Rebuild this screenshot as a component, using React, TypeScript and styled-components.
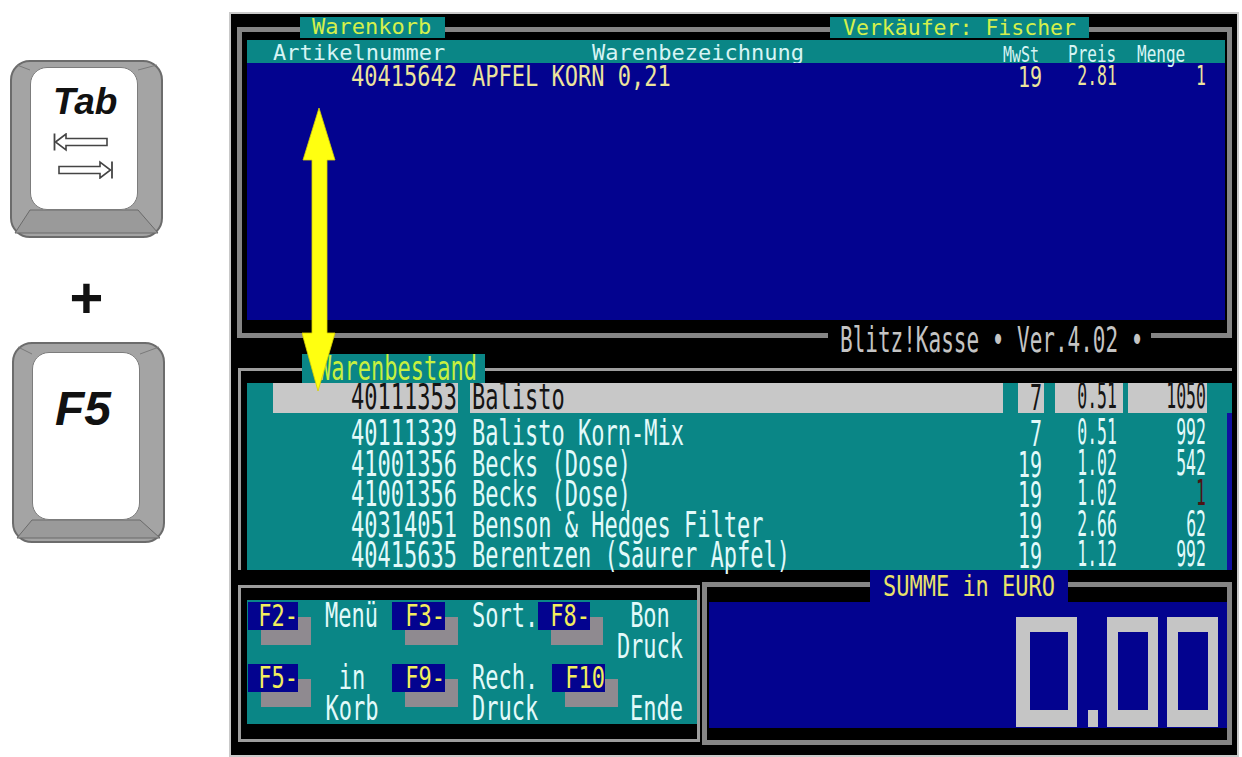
import React from "react";
import styled, { createGlobalStyle } from "styled-components";

const BLUE = "#03038f";
const TEAL = "#0a8686";
const FRAME = "#858585";
const THIN = "#9d9d9d";

type Item = {
  nr: string;
  name: string;
  mwst: string;
  preis: string;
  menge: string;
  low?: boolean;
};

const basket: Item[] = [
  { nr: "40415642", name: "APFEL KORN 0,21", mwst: "19", preis: "2.81", menge: "1" },
];

const stock: Item[] = [
  { nr: "40111353", name: "Balisto", mwst: "7", preis: "0.51", menge: "1050" },
  { nr: "40111339", name: "Balisto Korn-Mix", mwst: "7", preis: "0.51", menge: "992" },
  { nr: "41001356", name: "Becks (Dose)", mwst: "19", preis: "1.02", menge: "542" },
  { nr: "41001356", name: "Becks (Dose)", mwst: "19", preis: "1.02", menge: "1", low: true },
  { nr: "40314051", name: "Benson & Hedges Filter", mwst: "19", preis: "2.66", menge: "62" },
  { nr: "40415635", name: "Berentzen (Saurer Apfel)", mwst: "19", preis: "1.12", menge: "992" },
];

const GlobalStyle = createGlobalStyle`
  html, body {
    margin: 0;
    padding: 0;
    background: #fff;
  }
  body {
    font-family: "DejaVu Sans Mono", monospace;
  }
`;

export default function App() {
  return (
    <>
      <GlobalStyle />
      <Page>
        <Keys>
          <KeyCap $w={153} $h={178} $pad="5px 23px 26px 18px">
            <Bevel viewBox="0 0 149 174" preserveAspectRatio="none">
              <polygon points="18,148 126,148 146,171 3,171" fill="#9a9a9a" stroke="#6a6a6a" strokeWidth="1" />
              <line x1="18" y1="8" x2="5" y2="3" stroke="#7a7a7a" strokeWidth="1" />
              <line x1="126" y1="8" x2="145" y2="3" stroke="#7a7a7a" strokeWidth="1" />
            </Bevel>
            <KeyFace $pt={15}>
              <KeyLabel $size={37}>Tab</KeyLabel>
              <TabArrows viewBox="0 0 62 46" width="62" height="46">
                <line x1="1.5" y1="0.5" x2="1.5" y2="17.5" stroke="#444" strokeWidth="1.8" />
                <polygon
                  points="2.5,9 13,1 13,5.5 54,5.5 54,12.5 13,12.5 13,17"
                  fill="#fff"
                  stroke="#444"
                  strokeWidth="1.6"
                />
                <polygon
                  points="6,33.5 47,33.5 47,29 57.5,37 47,45 47,40.5 6,40.5"
                  fill="#fff"
                  stroke="#444"
                  strokeWidth="1.6"
                />
                <line x1="59" y1="28.5" x2="59" y2="45.5" stroke="#444" strokeWidth="1.8" />
              </TabArrows>
            </KeyFace>
          </KeyCap>
          <Plus>+</Plus>
          <KeyCap $w={153} $h={201} $pad="8px 23px 21px 18px" $ml={2}>
            <Bevel viewBox="0 0 149 197" preserveAspectRatio="none">
              <polygon points="18,176 126,176 146,194 3,194" fill="#9a9a9a" stroke="#6a6a6a" strokeWidth="1" />
              <line x1="18" y1="10" x2="4" y2="3" stroke="#7a7a7a" strokeWidth="1" />
              <line x1="126" y1="10" x2="145" y2="3" stroke="#7a7a7a" strokeWidth="1" />
            </Bevel>
            <KeyFace $pt={32}>
              <KeyLabel $size={48}>F5</KeyLabel>
            </KeyFace>
          </KeyCap>
        </Keys>

        <Screen>
          <TopFrame>
            <FrameTab $left={58} $top={-15} $h={21} $pad="0 14px 0 12px">
              Warenkorb
            </FrameTab>
            <FrameTab $left={588} $top={-15} $h={21} $pad="0 13px 0 13px" $size={21.5}>
              Verkäufer: Fischer
            </FrameTab>

            <HeaderBar>
              <HeadCell $pl={26}>Artikelnummer</HeadCell>
              <HeadCell>Warenbezeichnung</HeadCell>
              <HeadCell>
                <Tall $size={15} $s={1.45}>MwSt</Tall>
              </HeadCell>
              <HeadCell>
                <Tall $size={16} $s={1.4}>Preis</Tall>
              </HeadCell>
              <HeadCell>
                <Tall $size={16} $s={1.4}>Menge</Tall>
              </HeadCell>
            </HeaderBar>

            <BasketArea>
              {basket.map((item, i) => (
                <LineItem key={i} item={item} scale={1.25} h={24} pt={4} />
              ))}
            </BasketArea>

            <VersionTag>
              <Tall $size={21} $s={1.7}>Blitz!Kasse • Ver.4.02 •</Tall>
            </VersionTag>
          </TopFrame>

          <StockFrame>
            <StockTab>
              <Tall $s={1.5}>Warenbestand</Tall>
            </StockTab>
            <StockList>
              {stock.map((item, i) =>
                i === 0 ? (
                  <LineItem key={i} item={item} scale={1.6} h={30} pt={0} hl />
                ) : (
                  <LineItem key={i} item={item} scale={1.6} h={30.5} pt={12} />
                )
              )}
            </StockList>
            <ScrollTrack />
          </StockFrame>

          <BottomRow>
            <FnPanel>
              <FnGrid>
                <FKey $col={1} $row={1} $ml={1} $w={50}>
                  <Tall $s={1.4}>F2-</Tall>
                </FKey>
                <FLabel $col={2} $row={1} $pl={13}>
                  <Tall $s={1.55}>Menü</Tall>
                </FLabel>
                <FKey $col={3} $row={1} $w={53}>
                  <Tall $s={1.4}>F3-</Tall>
                </FKey>
                <FLabel $col={4} $row={1} $pl={27} $left>
                  <Tall $s={1.55}>Sort.</Tall>
                </FLabel>
                <FKey $col={5} $row={1} $w={52}>
                  <Tall $s={1.4}>F8-</Tall>
                </FKey>
                <FLabel $col={6} $row={1} $pl={13}>
                  <Tall $s={1.55}>Bon</Tall>
                </FLabel>
                <FLabel $col={6} $row={2} $pl={13}>
                  <Tall $s={1.55}>Druck</Tall>
                </FLabel>

                <FKey $col={1} $row={3} $ml={1} $w={50}>
                  <Tall $s={1.4}>F5-</Tall>
                </FKey>
                <FLabel $col={2} $row={3} $pl={14}>
                  <Tall $s={1.55}>in</Tall>
                </FLabel>
                <FLabel $col={2} $row={4} $pl={14}>
                  <Tall $s={1.55}>Korb</Tall>
                </FLabel>
                <FKey $col={3} $row={3} $w={53}>
                  <Tall $s={1.4}>F9-</Tall>
                </FKey>
                <FLabel $col={4} $row={3} $pl={27} $left>
                  <Tall $s={1.55}>Rech.</Tall>
                </FLabel>
                <FLabel $col={4} $row={4} $pl={27} $left>
                  <Tall $s={1.55}>Druck</Tall>
                </FLabel>
                <FKey $col={5} $row={3} $ml={14} $w={53}>
                  <Tall $s={1.4}>F10</Tall>
                </FKey>
                <FLabel $col={6} $row={4} $pl={26}>
                  <Tall $s={1.55}>Ende</Tall>
                </FLabel>
              </FnGrid>
            </FnPanel>

            <SummePanel>
              <SummeTag>
                <Tall $s={1.3}>SUMME in EURO</Tall>
              </SummeTag>
              <TotalDisplay aria-label="0.00">
                <BigZero $w={61} $l={14} $r={9} />
                <BigDot $ml={11} />
                <BigZero $w={51} $l={11} $r={10} $ml={9} />
                <BigZero $w={51} $l={11} $r={10} $ml={9} />
              </TotalDisplay>
            </SummePanel>
          </BottomRow>

          <SwitchArrow viewBox="0 0 34 284" width="34" height="284">
            <polygon
              points="17,0 33,52 25,52 25,225 33,225 16,283 0,225 10,225 10,52 1,52"
              fill="#ffff10"
              stroke="#d8d000"
              strokeWidth="0.8"
            />
          </SwitchArrow>
        </Screen>
      </Page>
    </>
  );
}

function LineItem({
  item,
  scale,
  h,
  pt,
  hl,
}: {
  item: Item;
  scale: number;
  h: number;
  pt: number;
  hl?: boolean;
}) {
  return (
    <Row $h={h} $pt={pt}>
      <Cell $w={185} $ml={26} $right $pr={1} $hl={hl}>
        <Tall $s={scale}>{item.nr}</Tall>
      </Cell>
      <Cell $w={533} $ml={12} $pl={2} $hl={hl}>
        <Tall $s={scale}>{item.name}</Tall>
      </Cell>
      <Cell $w={26} $ml={15} $right $pr={2} $hl={hl}>
        <Tall $size={20} $s={scale * 1.1}>
          {item.mwst}
        </Tall>
      </Cell>
      <Cell $w={68} $ml={11} $right $pr={6} $hl={hl}>
        <Tall $size={16.5} $s={scale * 1.33}>
          {item.preis}
        </Tall>
      </Cell>
      <Cell $w={79} $ml={5} $right $pr={1} $hl={hl} $low={item.low}>
        <Tall $size={16.5} $s={scale * 1.33}>
          {item.menge}
        </Tall>
      </Cell>
    </Row>
  );
}

const Page = styled.div`
  display: flex;
  width: 1242px;
  height: 757px;
  overflow: hidden;
  background: #fff;
`;

/* keyboard keys on the left */

const Keys = styled.div`
  flex: none;
  width: 229px;
  box-sizing: border-box;
  padding: 60px 0 0 10px;
  display: flex;
  flex-direction: column;
  align-items: flex-start;
`;

const KeyCap = styled.div<{ $w: number; $h: number; $pad: string; $ml?: number }>`
  position: relative;
  width: ${(p) => p.$w}px;
  height: ${(p) => p.$h}px;
  margin-left: ${(p) => p.$ml ?? 0}px;
  box-sizing: border-box;
  padding: ${(p) => p.$pad};
  background: #a4a4a4;
  border: 2px solid #6c6c6c;
  border-radius: 20px;
`;

const Bevel = styled.svg`
  position: absolute;
  inset: 0;
  width: 100%;
  height: 100%;
`;

const KeyFace = styled.div<{ $pt: number }>`
  position: relative;
  height: 100%;
  box-sizing: border-box;
  padding: ${(p) => p.$pt}px 0 0 22px;
  background: #fff;
  border: 1px solid #7c7c7c;
  border-radius: 17px;
  display: flex;
  flex-direction: column;
  align-items: flex-start;
`;

const KeyLabel = styled.span<{ $size: number }>`
  font-family: "Liberation Sans", Arial, sans-serif;
  font-weight: bold;
  font-style: italic;
  font-size: ${(p) => p.$size}px;
  line-height: 1;
  color: #111;
`;

const TabArrows = styled.svg`
  margin-top: 13px;
`;

const Plus = styled.div`
  width: 153px;
  height: 104px;
  box-sizing: border-box;
  padding-top: 16px;
  display: flex;
  align-items: center;
  justify-content: center;
  font-family: "Liberation Sans", Arial, sans-serif;
  font-weight: bold;
  font-size: 58px;
  line-height: 1;
  color: #111;
`;

/* the DOS screen */

const Screen = styled.div`
  position: relative;
  flex: none;
  width: 1010px;
  height: 745px;
  margin-top: 12px;
  box-sizing: border-box;
  border: 2px solid #c9c9c9;
  background: #000;
  padding: 13px 5px 0 6px;
  display: flex;
  flex-direction: column;
  font-family: "DejaVu Sans Mono", monospace;
  font-size: 22px;
  line-height: 1;
  overflow: hidden;
`;

const Tall = styled.span<{ $s?: number; $size?: number }>`
  display: inline-block;
  font-size: ${(p) => p.$size ?? 22}px;
  line-height: 1;
  white-space: pre;
  transform: scaleY(${(p) => p.$s ?? 1});
`;

const TopFrame = styled.div`
  position: relative;
  flex: none;
  height: 311px;
  box-sizing: border-box;
  border: 5px solid ${FRAME};
  padding: 8px 2px 13px 5px;
  display: flex;
  flex-direction: column;
`;

const FrameTab = styled.div<{ $left: number; $top: number; $h: number; $pad: string; $size?: number }>`
  position: absolute;
  left: ${(p) => p.$left}px;
  top: ${(p) => p.$top}px;
  height: ${(p) => p.$h}px;
  padding: ${(p) => p.$pad};
  display: flex;
  align-items: flex-end;
  background: ${TEAL};
  color: #d4f04c;
  font-size: ${(p) => p.$size ?? 22}px;
  white-space: pre;
`;

const HeaderBar = styled.div`
  flex: none;
  display: grid;
  grid-template-columns: 345px 411px 65px 69px 1fr;
  align-items: center;
  height: 23px;
  box-sizing: border-box;
  padding-top: 2px;
  background: ${TEAL};
  color: #d6f4f4;
`;

const HeadCell = styled.div<{ $pl?: number }>`
  padding-left: ${(p) => p.$pl ?? 0}px;
  white-space: pre;
`;

const BasketArea = styled.div`
  flex: 1;
  background: ${BLUE};
  color: #ece49c;
`;

const VersionTag = styled.div`
  position: absolute;
  left: 586px;
  top: 295px;
  height: 26px;
  padding: 0 8px 0 12px;
  display: flex;
  align-items: center;
  background: #000;
  color: #c4c4c4;
`;

const Row = styled.div<{ $h: number; $pt: number }>`
  display: flex;
  align-items: stretch;
  height: ${(p) => p.$h}px;
  box-sizing: border-box;
  padding-top: ${(p) => p.$pt}px;
`;

const Cell = styled.div<{
  $w: number;
  $ml: number;
  $right?: boolean;
  $pl?: number;
  $pr?: number;
  $hl?: boolean;
  $low?: boolean;
}>`
  flex: none;
  width: ${(p) => p.$w}px;
  margin-left: ${(p) => p.$ml}px;
  box-sizing: border-box;
  padding: 0 ${(p) => p.$pr ?? 0}px 0 ${(p) => p.$pl ?? 0}px;
  display: flex;
  align-items: center;
  justify-content: ${(p) => (p.$right ? "flex-end" : "flex-start")};
  background: ${(p) => (p.$hl ? "#c8c8c8" : "transparent")};
  color: ${(p) => (p.$hl ? "#141414" : p.$low ? "#4c1414" : "inherit")};
`;

const StockFrame = styled.div`
  position: relative;
  flex: none;
  margin: 30px 0 0 1px;
  height: 202px;
  box-sizing: border-box;
  border-top: 3px solid ${THIN};
  border-left: 3px solid ${THIN};
  padding: 12px 0 0 6px;
  display: flex;
`;

const StockTab = styled.div`
  position: absolute;
  left: 61px;
  top: -17px;
  height: 29px;
  padding: 0 8px 0 16px;
  display: flex;
  align-items: center;
  background: ${TEAL};
  color: #c6f040;
`;

const StockList = styled.div`
  flex: 1;
  display: flex;
  flex-direction: column;
  background: ${TEAL};
  color: #e2fafa;
`;

const ScrollTrack = styled.div`
  flex: none;
  width: 5px;
  background: linear-gradient(to bottom, ${TEAL} 30px, #1010a0 30px);
`;

const BottomRow = styled.div`
  flex: none;
  display: flex;
  align-items: flex-start;
`;

const FnPanel = styled.div`
  flex: none;
  margin: 15px 0 0 1px;
  width: 462px;
  height: 157px;
  box-sizing: border-box;
  border: 3px solid ${THIN};
  padding: 12px 0 15px 6px;
`;

const FnGrid = styled.div`
  height: 100%;
  display: grid;
  grid-template-columns: 51px 94px 53px 93px 52px 1fr;
  grid-template-rows: repeat(4, 1fr);
  background: ${TEAL};
`;

const FKey = styled.div<{ $col: number; $row: number; $ml?: number; $w: number }>`
  grid-column: ${(p) => p.$col};
  grid-row: ${(p) => p.$row};
  align-self: center;
  justify-self: start;
  width: ${(p) => p.$w}px;
  height: 28px;
  margin-left: ${(p) => p.$ml ?? 0}px;
  display: flex;
  align-items: center;
  justify-content: flex-end;
  background: ${BLUE};
  color: #f2ee5c;
  box-shadow: 13px 15px 0 #8f8a90;
`;

const FLabel = styled.div<{ $col: number; $row: number; $pl?: number; $left?: boolean }>`
  grid-column: ${(p) => p.$col};
  grid-row: ${(p) => p.$row};
  padding-left: ${(p) => p.$pl ?? 0}px;
  display: flex;
  align-items: center;
  justify-content: ${(p) => (p.$left ? "flex-start" : "center")};
  color: #e2fafa;
`;

const SummePanel = styled.div`
  position: relative;
  flex: none;
  margin: 12px 0 0 2px;
  width: 530px;
  height: 163px;
  box-sizing: border-box;
  border: 5px solid ${FRAME};
  padding: 15px 0 12px 2px;
`;

const SummeTag = styled.div`
  position: absolute;
  left: 163px;
  top: -17px;
  width: 198px;
  height: 33px;
  display: flex;
  align-items: center;
  justify-content: center;
  background: ${BLUE};
  color: #e8e26a;
`;

const TotalDisplay = styled.div`
  height: 100%;
  box-sizing: border-box;
  padding: 0 9px 1px 0;
  display: flex;
  align-items: flex-end;
  justify-content: flex-end;
  background: ${BLUE};
`;

const BigZero = styled.div<{ $w: number; $l: number; $r: number; $ml?: number }>`
  flex: none;
  width: ${(p) => p.$w}px;
  height: 110px;
  margin-left: ${(p) => p.$ml ?? 0}px;
  box-sizing: border-box;
  border-style: solid;
  border-color: #c5c5c5;
  border-width: 15px ${(p) => p.$r}px 17px ${(p) => p.$l}px;
`;

const BigDot = styled.div<{ $ml: number }>`
  flex: none;
  width: 10px;
  height: 17px;
  margin-left: ${(p) => p.$ml}px;
  background: #c5c5c5;
`;

const SwitchArrow = styled.svg`
  position: absolute;
  left: 71px;
  top: 94px;
`;
